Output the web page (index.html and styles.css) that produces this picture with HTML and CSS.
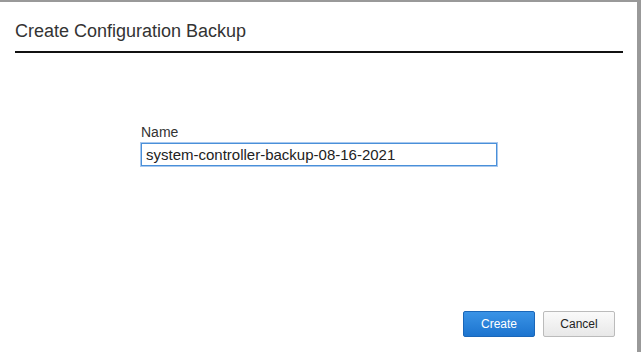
FILE: index.html
```html
<!DOCTYPE html>
<html lang="en">
<head>
    <meta charset="UTF-8">
    <title>Create Configuration Backup</title>
    <link rel="stylesheet" href="styles.css">
</head>
<body>
    <div class="dialog">
        <div class="dialog-header">
            <h1>Create Configuration Backup</h1>
        </div>
        <div class="dialog-body">
            <label for="name">Name</label>
            <input type="text" id="name" value="system-controller-backup-08-16-2021">
        </div>
        <div class="dialog-footer">
            <button class="btn btn-primary">Create</button>
            <button class="btn">Cancel</button>
        </div>
    </div>
</body>
</html>
```

FILE: styles.css
```css
body {
    margin: 0;
    font-family: "Liberation Sans", Arial, sans-serif;
    background: #fff;
}

.dialog {
    width: 637px;
    height: 350px;
    border-top: 2px solid #999;
    border-right: 4px solid #999;
    display: flex;
    flex-direction: column;
    background: #fff;
}

.dialog-header {
    margin: 0 14px 0 15px;
    height: 49px;
    border-bottom: 2px solid #111;
}

h1 {
    margin: 0;
    padding-top: 19px;
    font-size: 18px;
    font-weight: normal;
    color: #333;
}

.dialog-body {
    padding: 71px 0 0 141px;
    display: flex;
    flex-direction: column;
    flex: 1;
}

label {
    font-size: 14px;
    color: #333;
    line-height: 16px;
    margin-bottom: 3px;
}

input {
    width: 346px;
    height: 19px;
    margin: 0;
    padding: 1px 4px;
    font-family: "Liberation Sans", Arial, sans-serif;
    font-size: 15px;
    color: #222;
    border: 1px solid #4a90d9;
    box-shadow: 0 0 0 1px #a8c8ee;
    outline: none;
}

.dialog-footer {
    display: flex;
    justify-content: flex-end;
    gap: 8px;
    padding: 0 22px 15px 0;
}

.btn {
    width: 72px;
    height: 26px;
    font-family: "Liberation Sans", Arial, sans-serif;
    font-size: 12px;
    color: #222;
    background: linear-gradient(#fafafa, #e8e8e8);
    border: 1px solid #bbb;
    border-radius: 2px;
}

.btn-primary {
    color: #fff;
    background: linear-gradient(#3a93e6, #1c74cf);
    border-color: #1a66b8;
}
```
